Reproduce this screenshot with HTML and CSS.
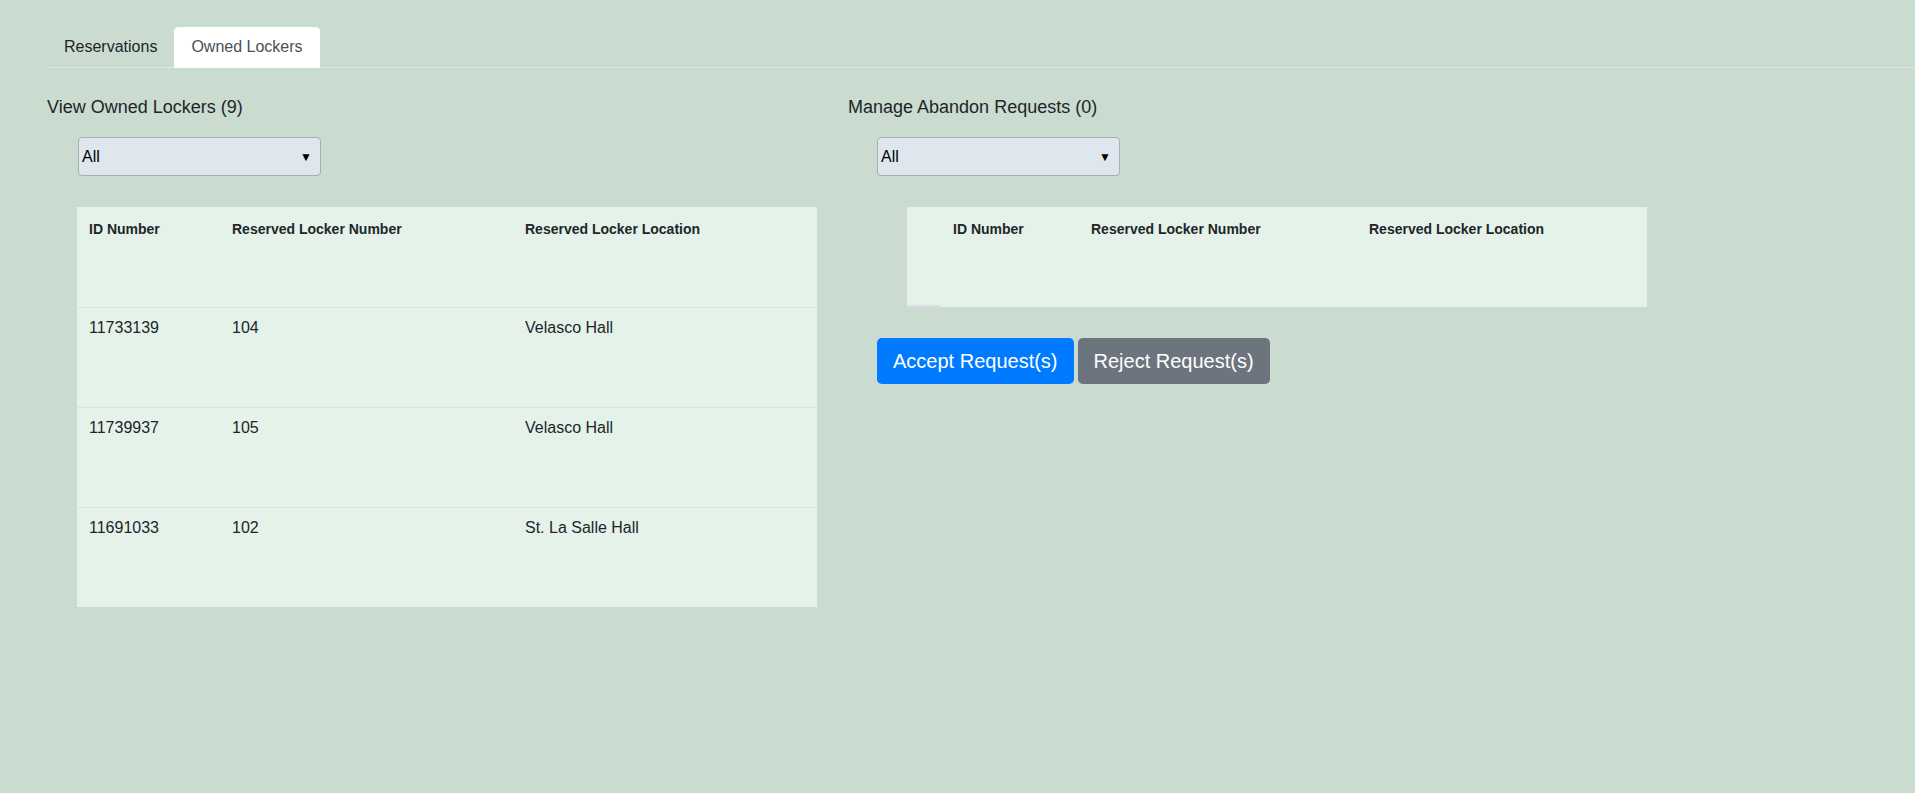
FILE: index.html
```html
<!DOCTYPE html>
<html lang="en">
<head>
<meta charset="utf-8">
<title>Owned Lockers</title>
<link rel="stylesheet" href="styles.css">
</head>
<body>
  <ul class="tabs">
    <li class="tab">Reservations</li>
    <li class="tab tab-active">Owned Lockers</li>
  </ul>

  <div class="panels">
    <section class="panel panel-left">
      <h2 class="panel-title">View Owned Lockers (9)</h2>
      <div class="fake-select select-left"><span>All</span><span class="caret">&#9660;</span></div>
      <table class="locker-table table-left">
        <colgroup>
          <col class="c-id"><col class="c-num"><col class="c-loc">
        </colgroup>
        <thead>
          <tr><th>ID Number</th><th>Reserved Locker Number</th><th>Reserved Locker Location</th></tr>
        </thead>
        <tbody>
          <tr><td>11733139</td><td>104</td><td>Velasco Hall</td></tr>
          <tr><td>11739937</td><td>105</td><td>Velasco Hall</td></tr>
          <tr><td>11691033</td><td>102</td><td>St. La Salle Hall</td></tr>
        </tbody>
      </table>
    </section>

    <section class="panel panel-right">
      <h2 class="panel-title">Manage Abandon Requests (0)</h2>
      <div class="fake-select select-right"><span>All</span><span class="caret">&#9660;</span></div>
      <table class="locker-table table-right">
        <colgroup>
          <col class="r-check"><col class="r-id"><col class="r-num"><col class="r-loc">
        </colgroup>
        <thead>
          <tr><th class="check-th"></th><th>ID Number</th><th>Reserved Locker Number</th><th>Reserved Locker Location</th></tr>
        </thead>
      </table>
      <div class="actions">
        <button class="btn btn-accept">Accept Request(s)</button>
        <button class="btn btn-reject">Reject Request(s)</button>
      </div>
    </section>
  </div>
</body>
</html>
```

FILE: styles.css
```css
* { box-sizing: border-box; }

html, body {
  margin: 0;
  padding: 0;
}

body {
  background: #cadbd0;
  font-family: "Liberation Sans", Arial, sans-serif;
  color: #212529;
  font-size: 16px;
  min-height: 793px;
}

.tabs {
  list-style: none;
  margin: 27px 0 0 47px;
  padding: 0;
  display: flex;
  border-bottom: 1px solid #dfe5e3;
}

.tab {
  padding: 7px 16px 8px;
  line-height: 24px;
  font-size: 16px;
  color: #212529;
  border: 1px solid transparent;
  border-radius: 4px 4px 0 0;
  margin-bottom: -1px;
}

.tab-active {
  background: #ffffff;
  border-color: #ffffff;
  color: #495057;
}

.panels {
  display: flex;
  margin-left: 47px;
  margin-top: 26px;
}

.panel-left { width: 801px; }
.panel-right { width: 800px; }

.panel-title {
  margin: 0;
  font-size: 18px;
  font-weight: 400;
  line-height: 27px;
  color: #212529;
}

.fake-select {
  display: flex;
  justify-content: space-between;
  align-items: center;
  width: 243px;
  height: 39px;
  margin-top: 16px;
  padding: 0 8px 0 3px;
  background: #dee6ee;
  border: 1px solid #a9adaf;
  border-radius: 4px;
  font-size: 16px;
  color: #000;
}

.select-left { margin-left: 31px; }
.select-right { margin-left: 29px; }

.caret {
  font-size: 12px;
  color: #000;
}

.locker-table {
  border-collapse: collapse;
  table-layout: fixed;
  width: 740px;
  margin-top: 31px;
  background: #e5f2e9;
}

.table-left { margin-left: 30px; }
.table-right { margin-left: 59px; }

.c-id { width: 143px; }
.c-num { width: 293px; }
.c-loc { width: 304px; }

.r-check { width: 34px; }
.r-id { width: 138px; }
.r-num { width: 278px; }
.r-loc { width: 290px; }

.locker-table th,
.locker-table td {
  text-align: left;
  vertical-align: top;
  padding: 12px;
}

.locker-table th {
  font-size: 14px;
  font-weight: 700;
  line-height: 21px;
  height: 100px;
  color: #212529;
}

.locker-table td {
  font-size: 16px;
  line-height: 24px;
  height: 100px;
  padding-top: 8px;
  border-top: 1px solid #d9e3e2;
  color: #212529;
}

.check-th {
  box-shadow: inset 0 -2px 0 #dcdfe6;
}

.actions {
  display: flex;
  gap: 4px;
  margin-top: 31px;
  margin-left: 29px;
}

.btn {
  font-family: "Liberation Sans", Arial, sans-serif;
  font-size: 20px;
  line-height: 30px;
  padding: 8px 16px;
  border: 0;
  border-radius: 4.8px;
  color: #ffffff;
  cursor: pointer;
}

.btn-accept {
  background: #007bff;
}

.btn-reject {
  background: #6c757d;
}
```
